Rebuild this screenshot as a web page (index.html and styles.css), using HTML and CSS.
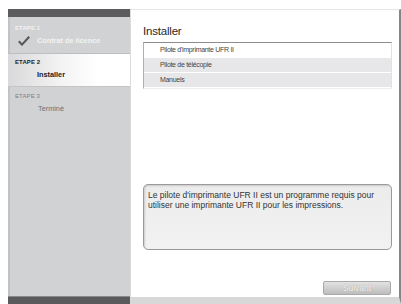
FILE: index.html
```html
<!DOCTYPE html>
<html lang="fr">
<head>
<meta charset="utf-8">
<link rel="stylesheet" href="styles.css">
</head>
<body>
<div class="window">
  <aside class="sidebar">
    <div class="bar"></div>
    <div class="step done">
      <div class="step-label">ETAPE 1</div>
      <div class="step-name">
        <svg class="check" width="12" height="10" viewBox="0 0 12 10"><path d="M0.8 5.2 L4 8.6 L11.2 0.8" fill="none" stroke="#555" stroke-width="2"/></svg>
        <span>Contrat de licence</span>
      </div>
    </div>
    <div class="step current">
      <div class="step-label">ETAPE 2</div>
      <div class="step-name"><span>Installer</span></div>
    </div>
    <div class="step todo">
      <div class="step-label">ETAPE 3</div>
      <div class="step-name"><span>Terminé</span></div>
    </div>
    <div class="spacer"></div>
    <div class="bar bottom"></div>
  </aside>
  <main class="panel">
    <h1 class="title">Installer</h1>
    <ul class="list">
      <li class="row">Pilote d'imprimante UFR II</li>
      <li class="row alt">Pilote de télécopie</li>
      <li class="row alt">Manuels</li>
    </ul>
    <div class="grow"></div>
    <div class="desc">Le pilote d'imprimante UFR II est un programme requis pour utiliser une imprimante UFR II pour les impressions.</div>
    <div class="actions">
      <button class="btn" disabled>Suivant</button>
    </div>
  </main>
</div>
</body>
</html>
```
FILE: styles.css
```css
html, body {
  margin: 0;
  padding: 0;
  background: #ffffff;
  font-family: "Liberation Sans", Arial, sans-serif;
}
.window {
  display: flex;
  margin: 9px 0 0 8px;
  height: 295px;
}
.sidebar {
  width: 122px;
  display: flex;
  flex-direction: column;
  background: #d1d2d4;
  box-shadow: inset 2px 0 0 #c2c3c5;
}
.bar {
  height: 8px;
  background: #5c5c5e;
}
.bar.bottom {
  height: 7px;
  background: #5a5a5c;
  border-top: 1px solid #8a8a8c;
}
.step {
  padding: 0 0 0 7px;
  display: flex;
  flex-direction: column;
}
.step.done {
  height: 37px;
  border-bottom: 1px solid #bdbec0;
  padding-top: 8px;
  box-sizing: border-box;
}
.step.current {
  height: 33px;
  background: linear-gradient(to right, #d9d9db 0%, #f4f4f4 45%, #ffffff 75%);
  border-bottom: 1px solid #c4c5c7;
  padding-top: 5px;
  box-sizing: border-box;
}
.step.todo {
  padding-top: 6px;
}
.step-label {
  font-size: 6px;
  font-weight: bold;
  line-height: 7px;
  letter-spacing: 0.1px;
}
.step-name {
  display: flex;
  align-items: center;
  gap: 7px;
  margin-top: 3px;
  padding-left: 3px;
  font-size: 7.3px;
  font-weight: bold;
  line-height: 10px;
}
.done .step-label, .done .step-name span { color: #f2f2f2; }
.done .step-name { margin-top: 4px; }
.current .step-label { color: #222; }
.current .step-name { color: #222; padding-left: 22px; margin-top: 4px; }
.todo .step-label { color: #808082; font-weight: normal; }
.todo .step-name { color: #707072; padding-left: 23px; font-weight: normal; margin-top: 4px; }
.spacer { flex: 1; }

.panel {
  flex: 1;
  display: flex;
  flex-direction: column;
  background: #ffffff;
  border-left: 1px solid #dcdcdc;
  border-top: 1px solid #e6e6e6;
  border-right: 2px solid #858585;
  border-bottom: 7px solid #d8d8d8;
  padding: 0 7px 0 12px;
  box-sizing: border-box;
}
.title {
  margin: 14px 0 0 0;
  font-size: 11.5px;
  letter-spacing: -0.2px;
  font-weight: normal;
  color: #2a2a2a;
  line-height: 14px;
}
.list {
  list-style: none;
  margin: 4px 0 0 0;
  padding: 0;
  border-top: 1px solid #8c8c8c;
  border-left: 1px solid #b0b0b0;
  border-right: 1px solid #e2e2e2;
  border-bottom: 1px solid #eeeeee;
}
.row {
  height: 14px;
  line-height: 14px;
  padding-left: 16px;
  font-size: 7px;
  letter-spacing: -0.3px;
  color: #444;
  border-bottom: 1px solid #ffffff;
}
.row.alt { background: #e7e7e9; }
.grow { flex: 1; }
.desc {
  height: 66px;
  box-sizing: border-box;
  border: 1px solid #9a9a9a;
  border-radius: 5px;
  background: linear-gradient(#ececec, #f2f2f2);
  box-shadow: inset 1px 1px 2px rgba(0,0,0,0.15);
  padding: 5px 4px;
  font-size: 8.5px;
  line-height: 10px;
  color: #333;
}
.actions {
  display: flex;
  justify-content: flex-end;
  padding: 31px 0 2px 0;
}
.btn {
  width: 68px;
  height: 14px;
  border: 1px solid #a8a8a8;
  border-radius: 2px;
  background: linear-gradient(#e2e2e2, #bdbdbd);
  color: #f4f4f4;
  font-family: "Liberation Sans", Arial, sans-serif;
  font-size: 8.5px;
  padding: 0;
  margin-right: 1px;
  text-shadow: 0 0 1px #999;
}
```
